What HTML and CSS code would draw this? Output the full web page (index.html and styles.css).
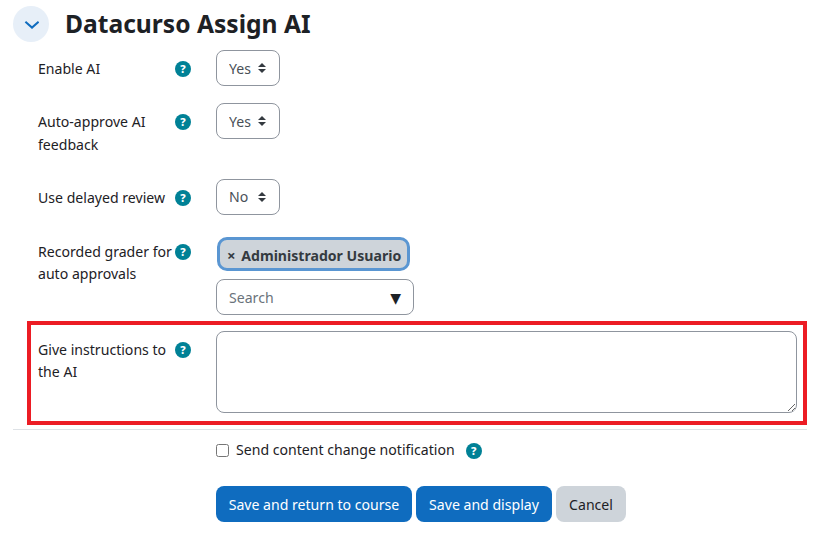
FILE: index.html
```html
<!DOCTYPE html>
<html lang="en">
<head>
    <meta charset="UTF-8">
    <title>Datacurso Assign AI</title>
    <link rel="stylesheet" href="styles.css">
</head>
<body>
    <div class="section-head">
        <span class="collapse-btn">
            <svg width="16" height="16" viewBox="0 0 16 16"><path d="M2.4 5.8 9 11.6l6.6-5.8" fill="none" stroke="#0f6cbf" stroke-width="2"/></svg>
        </span>
        <h3>Datacurso Assign AI</h3>
    </div>

    <form class="settings">
        <div class="row">
            <label class="row-label">Enable AI</label>
            <span class="help">?</span>
            <select class="pick"><option>Yes</option></select>
        </div>
        <div class="row">
            <label class="row-label">Auto-approve AI feedback</label>
            <span class="help">?</span>
            <select class="pick"><option>Yes</option></select>
        </div>
        <div class="row">
            <label class="row-label">Use delayed review</label>
            <span class="help">?</span>
            <select class="pick"><option>No</option></select>
        </div>
        <div class="row row-grader">
            <label class="row-label">Recorded grader for auto approvals</label>
            <span class="help">?</span>
            <div class="grader">
                <span class="chip"><span class="chip-x">×</span> Administrador Usuario</span>
                <div class="search">
                    <input type="text" placeholder="Search">
                    <span class="search-arrow">▼</span>
                </div>
            </div>
        </div>

        <div class="highlight">
            <div class="row row-last">
                <label class="row-label">Give instructions to the AI</label>
                <span class="help">?</span>
                <textarea class="instructions"></textarea>
            </div>
        </div>
    </form>

    <hr class="divider">

    <div class="notify">
        <input type="checkbox" id="notify">
        <label for="notify">Send content change notification</label>
        <span class="help">?</span>
    </div>

    <div class="actions">
        <button class="btn btn-primary btn-return">Save and return to course</button>
        <button class="btn btn-primary btn-display">Save and display</button>
        <button class="btn btn-cancel">Cancel</button>
    </div>
</body>
</html>
```

FILE: styles.css
```css
* {
    box-sizing: border-box;
}

body {
    margin: 0;
    padding: 6px 12px 0 13px;
    font-family: "Noto Sans", sans-serif;
    font-size: 14.1px;
    line-height: 22.5px;
    color: #1d2125;
    background: white;
}

.section-head {
    display: flex;
    align-items: center;
    gap: 16px;
    height: 36px;
    margin-bottom: 8px;
}

.collapse-btn {
    display: flex;
    align-items: center;
    justify-content: center;
    width: 36px;
    height: 36px;
    border-radius: 50%;
    background: #e7eff8;
}

h3 {
    margin: 0;
    font-size: 24.6px;
    font-weight: 700;
    line-height: 36px;
}

.settings {
    margin: 0;
}

.row {
    display: grid;
    grid-template-columns: 137px 41px 1fr;
    align-items: start;
    padding-left: 25px;
    margin-bottom: 16.5px;
}

.row-label {
    padding: 8px 0 6px;
}

.row-grader .row-label {
    padding-top: 9px;
}

.help {
    display: flex;
    align-items: center;
    justify-content: center;
    width: 16px;
    height: 16px;
    margin-top: 11px;
    border-radius: 50%;
    background: #008196;
    color: white;
    font-size: 11px;
    font-weight: 800;
    line-height: 16px;
}

.row-grader .help {
    margin-top: 12px;
}

.pick {
    appearance: none;
    width: 64px;
    height: 36px;
    padding: 2px 0 0 12px;
    border: 1px solid #8f959e;
    border-radius: 8px;
    background: white url("data:image/svg+xml,%3Csvg xmlns='http://www.w3.org/2000/svg' width='10' height='12'%3E%3Cpath d='M5 1l4 4H1zM5 11l4-4H1z' fill='%23343a40'/%3E%3C/svg%3E") no-repeat right 12px center;
    font: inherit;
    color: #495057;
}

.grader {
    display: flex;
    flex-direction: column;
    align-items: flex-start;
    margin-top: 0.5px;
}

.chip {
    width: 193px;
    height: 34px;
    margin: 5px 0 7.5px 1px;
    padding: 1px 0 0 7px;
    border: 3px solid #5a96d2;
    border-radius: 10px;
    background: #ced4da;
    color: #343a40;
    font-weight: 700;
    line-height: 28px;
    white-space: nowrap;
}

.chip-x {
    margin-right: 2px;
    font-size: 15px;
}

.search {
    display: flex;
    align-items: center;
    justify-content: space-between;
    width: 198px;
    height: 36px;
    padding: 3px 12px 0;
    border: 1px solid #8f959e;
    border-radius: 8px;
}

.search input {
    width: 120px;
    padding: 0;
    border: none;
    outline: none;
    font: inherit;
}

.search input::placeholder {
    color: #6a737b;
}

.search-arrow {
    font-family: "DejaVu Sans", sans-serif;
    font-size: 14px;
    color: #1d2125;
}

.highlight {
    margin: -10.5px 0 0 14px;
    padding: 6px 6px 8px 7px;
    border: 4px solid #ec1c24;
}

.row-last {
    padding-left: 0;
    margin-bottom: 0;
}

.instructions {
    display: block;
    width: 100%;
    height: 82px;
    border: 1px solid #8f959e;
    border-radius: 8px;
}

.divider {
    margin: 4px 0 0;
    border: none;
    border-top: 1px solid #dee2e6;
}

.notify {
    display: flex;
    align-items: center;
    height: 22px;
    margin: 10px 0 0 203px;
}

.notify input {
    width: 13px;
    height: 13px;
    margin: 0 7px 0 0;
}

.notify .help {
    margin: 0 0 0 11px;
}

.actions {
    display: flex;
    gap: 4px;
    margin: 24px 0 0 203px;
}

.btn {
    height: 36px;
    padding: 3px 0 0;
    border: none;
    border-radius: 8px;
    font: inherit;
}

.btn-return {
    width: 196px;
}

.btn-display {
    width: 136px;
}

.btn-primary {
    background: #0f6cbf;
    color: white;
}

.btn-cancel {
    width: 70px;
    background: #ced4da;
    color: #1d2125;
}
```
